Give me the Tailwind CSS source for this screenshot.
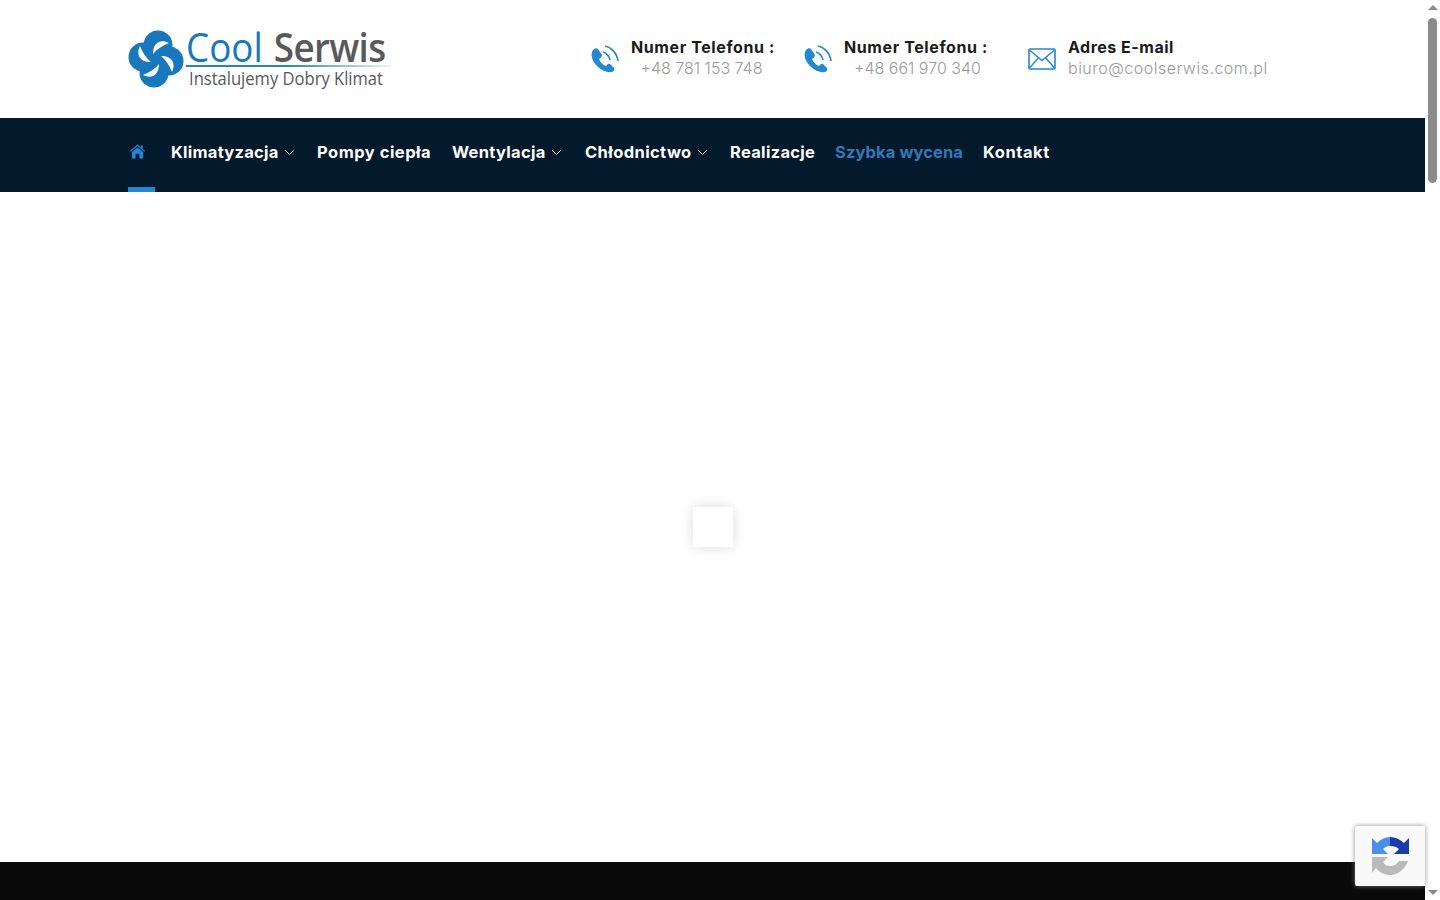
<!DOCTYPE html>
<html lang="en">
<head>
  <meta charset="UTF-8" />
  <title>Cool Serwis</title>
  <script src="https://cdn.jsdelivr.net/npm/@tailwindcss/browser@4"></script>
</head>
<body class="h-[900px] overflow-hidden bg-white font-['Inter',sans-serif]">
  <div class="relative flex h-[900px]">
    <div class="flex flex-1 flex-col">

      <!-- Top header -->
      <header class="flex h-[118px] items-center pl-[128px]">
        <!-- Logo -->
        <div class="flex items-center w-[462px]">
          <svg class="w-[56px] h-[58px] shrink-0" viewBox="0 0 56 58">
            <g fill="#1878bd">
              <circle cx="30" cy="15" r="14.5"/>
              <circle cx="41" cy="31" r="14.5"/>
              <circle cx="26" cy="43" r="14.5"/>
              <circle cx="15" cy="27" r="14.5"/>
            </g>
            <g fill="#fff">
              <path d="M12 16C8 24 11 32 23 32C18 28 15 23 12 16Z"/>
              <path transform="rotate(90 28 29)" d="M12 16C8 24 11 32 23 32C18 28 15 23 12 16Z"/>
              <path transform="rotate(180 28 29)" d="M12 16C8 24 11 32 23 32C18 28 15 23 12 16Z"/>
              <path transform="rotate(270 28 29)" d="M12 16C8 24 11 32 23 32C18 28 15 23 12 16Z"/>
            </g>
          </svg>
          <div class="ml-[2px] flex flex-col pb-[1px]">
            <div class="flex h-[34px] origin-left scale-x-[0.92] items-end whitespace-nowrap font-['Open_Sans',sans-serif] text-[40px] leading-[34px]">
              <span class="text-[#1878bd]">Cool</span>
              <span class="ml-[12px] font-semibold tracking-[-0.7px] text-[#58595b]">Serwis</span>
            </div>
            <div class="mt-[1px] h-[2px] w-[205px] bg-linear-to-r from-[#2a82c4] via-[#2a82c4] to-[#2a82c4]/10"></div>
            <div class="ml-[3px] mt-[2px] origin-left scale-x-[0.92] whitespace-nowrap font-['Open_Sans',sans-serif] text-[18px] leading-[18px] text-[#58595b]">Instalujemy Dobry Klimat</div>
          </div>
        </div>

        <!-- Contact: phone 1 -->
        <div class="flex items-center w-[213px]">
          <svg class="mt-[2px] w-[30px] h-[30px] shrink-0" viewBox="0 0 30 30">
            <path fill="#2487d2" d="M3 5C5 3 7 3 8 4L12 10C12 12 10 13 9 14C10 17 13 20 16 21C17 20 18 18 20 19L24 23C25 25 24 26 22 27C18 28 12 26 7 21C2 16 0 9 3 5Z"/>
            <path fill="none" stroke="#2487d2" stroke-width="1.6" d="M13 7C16 8 19 11 20 15M15 1C21 2 27 8 28 16"/>
          </svg>
          <div class="ml-[11px] pb-[2px] text-center">
            <div class="text-[16px] leading-[21px] font-bold tracking-[0.6px] text-[#1a1a1a]">Numer Telefonu :</div>
            <div class="pr-[3px] text-[16px] leading-[21px] font-light text-[#999]">+48 781 153 748</div>
          </div>
        </div>

        <!-- Contact: phone 2 -->
        <div class="flex items-center w-[225px]">
          <svg class="mt-[2px] w-[30px] h-[30px] shrink-0" viewBox="0 0 30 30">
            <path fill="#2487d2" d="M3 5C5 3 7 3 8 4L12 10C12 12 10 13 9 14C10 17 13 20 16 21C17 20 18 18 20 19L24 23C25 25 24 26 22 27C18 28 12 26 7 21C2 16 0 9 3 5Z"/>
            <path fill="none" stroke="#2487d2" stroke-width="1.6" d="M13 7C16 8 19 11 20 15M15 1C21 2 27 8 28 16"/>
          </svg>
          <div class="ml-[11px] pb-[2px] text-center">
            <div class="text-[16px] leading-[21px] font-bold tracking-[0.6px] text-[#1a1a1a]">Numer Telefonu :</div>
            <div class="pl-[3px] text-[16px] leading-[21px] font-light text-[#999]">+48 661 970 340</div>
          </div>
        </div>

        <!-- Contact: mail -->
        <div class="flex items-center">
          <svg class="w-[28px] h-[22px] shrink-0" viewBox="0 0 28 22">
            <rect x="1" y="1" width="26" height="20" rx="1" fill="none" stroke="#2487d2" stroke-width="1.6"/>
            <path fill="none" stroke="#2487d2" stroke-width="1.4" d="M1.5 2L14 12.5L26.5 2M1.5 20L10.5 9.8M26.5 20L17.5 9.8"/>
          </svg>
          <div class="ml-[12px] pb-[2px]">
            <div class="text-[16px] leading-[21px] font-bold tracking-[0.5px] text-[#1a1a1a]">Adres E-mail</div>
            <div class="text-[16px] leading-[21px] font-light tracking-[0.5px] text-[#999]">biuro@coolserwis.com.pl</div>
          </div>
        </div>
      </header>

      <!-- Main nav -->
      <nav class="flex h-[74px] items-start bg-[#03192c] pl-[128px] text-[16.5px] font-bold leading-[20px] text-white tracking-[0.4px]">
        <a class="flex h-[74px] w-[27px] flex-col items-start pl-[2px] pt-[26px] border-b-[5px] border-[#2388d3]">
          <svg class="w-[15px] h-[15px]" viewBox="0 0 16 16">
            <path fill="#2388d3" d="M8 0.5L11.5 3.4V1.5H13.5V5.1L16 7.2L15.2 8.2L8 2.2L0.8 8.2L0 7.2Z"/>
            <path fill="#2388d3" d="M8 3.6L14 8.6V15.5H10V10.5H6V15.5H2V8.6Z"/>
          </svg>
        </a>
        <a class="ml-[16px] mt-[24px] flex w-[146px] items-center tracking-[0.25px]">Klimatyzacja
          <svg class="ml-[5px] w-[11px] h-[7px]" viewBox="0 0 11 7"><path fill="none" stroke="#fff" stroke-width="1" d="M1 1L5.5 5.5L10 1"/></svg>
        </a>
        <a class="mt-[24px] w-[135px] tracking-[0.5px]">Pompy ciepła</a>
        <a class="mt-[24px] flex w-[133px] items-center tracking-[0.3px]">Wentylacja
          <svg class="ml-[5px] w-[11px] h-[7px]" viewBox="0 0 11 7"><path fill="none" stroke="#fff" stroke-width="1" d="M1 1L5.5 5.5L10 1"/></svg>
        </a>
        <a class="mt-[24px] flex w-[145px] items-center">Chłodnictwo
          <svg class="ml-[5px] w-[11px] h-[7px]" viewBox="0 0 11 7"><path fill="none" stroke="#fff" stroke-width="1" d="M1 1L5.5 5.5L10 1"/></svg>
        </a>
        <a class="mt-[24px] w-[105px] tracking-[0.3px]">Realizacje</a>
        <a class="mt-[24px] w-[148px] tracking-[0.1px] text-[#337ab7]">Szybka wycena</a>
        <a class="mt-[24px] tracking-[0.55px]">Kontakt</a>
      </nav>

      <!-- Content still loading -->
      <main class="flex-1 bg-white"></main>

      <footer class="h-[38px] bg-[#0a0a0a]"></footer>
    </div>

    <!-- Scrollbar -->
    <div class="flex w-[15px] flex-col items-center bg-white">
      <div class="mt-[5px] h-0 w-0 border-x-[5px] border-b-[5px] border-x-transparent border-b-[#8a8a8a]"></div>
      <div class="mt-[8px] h-[165px] w-[9px] rounded-full bg-[#8b8b8b]"></div>
      <div class="mt-auto mb-[5px] h-0 w-0 border-x-[5px] border-t-[5px] border-x-transparent border-t-[#8a8a8a]"></div>
    </div>

    <!-- Preloader -->
    <div class="absolute left-[693px] top-[507px] h-[40px] w-[40px] bg-white shadow-[0_0_14px_rgba(0,0,0,0.14)]"></div>

    <!-- reCAPTCHA badge -->
    <div class="absolute left-[1355px] top-[826px] flex h-[60px] w-[70px] items-center justify-center rounded-l-[2px] bg-[#f9f9f9] shadow-[0_0_5px_rgba(128,128,128,0.9)]">
      <svg class="w-[42px] h-[42px]" viewBox="0 0 42 42">
        <path fill="#bababa" d="M21 40C15 40 10 37 7 33L3 38V22H19L14 27C16 30 18 31 21 31C25 31 28 29 30 26H39C36 34 29 40 21 40Z"/>
        <path fill="#4a90e8" d="M21 2V11C18 11 16 12 14 14L19 19H3V3L8 8C12 4 16 2 21 2Z"/>
        <path fill="#1c3aa9" d="M21 2C26 2 31 4 35 8L40 3V19H25L30 14C28 12 25 11 21 11Z"/>
      </svg>
    </div>
  </div>
</body>
</html>
